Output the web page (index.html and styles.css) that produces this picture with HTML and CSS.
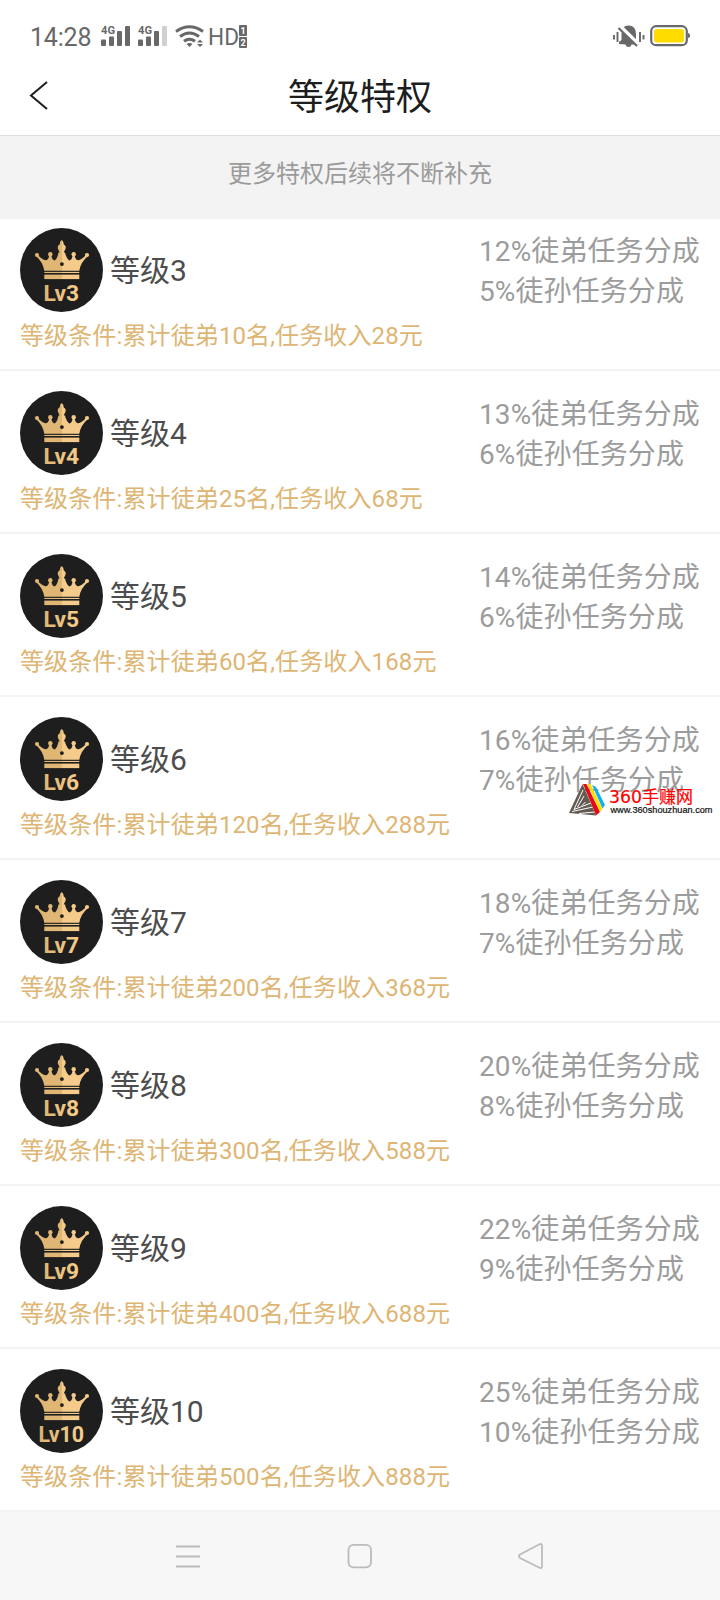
FILE: index.html
```html
<!DOCTYPE html>
<html lang="zh-CN">
<head>
<meta charset="utf-8">
<title>等级特权</title>
<link rel="stylesheet" href="styles.css">
</head>
<body>
<svg class="defs" aria-hidden="true">
  <defs>
    <linearGradient id="gold" gradientUnits="userSpaceOnUse" x1="0" y1="0" x2="83" y2="0">
      <stop offset="0.5" stop-color="#dfb673"/><stop offset="0.5" stop-color="#f4cb8a"/>
    </linearGradient>
    <linearGradient id="goldText" gradientUnits="userSpaceOnUse" x1="22" y1="0" x2="62" y2="0">
      <stop offset="0" stop-color="#dfb472"/><stop offset="1" stop-color="#f8d08e"/>
    </linearGradient>
    <symbol id="crown" viewBox="0 0 83 84">
      <ellipse cx="41.5" cy="42" rx="41.5" ry="42" fill="#1e1e1e"/>
      <g fill="url(#gold)">
        <circle cx="17" cy="27" r="2.1"/><circle cx="30.3" cy="26.3" r="2.2"/>
        <circle cx="53.7" cy="26.3" r="2.2"/><circle cx="67" cy="27" r="2.1"/>
        <path d="M41.7 12C43.2 13.2 43.8 15 43.6 16.2C45.5 17.2 46.2 19 45.5 20.8L43.8 24.3Q45.8 24.5 45.4 26.3Q47.5 32 49.8 32.6Q52 31.5 52.8 27.5L54.6 27.5Q55.6 32.2 58.2 32.3Q61.5 31.8 65.8 27.3L67.5 28.5Q60.8 34 59.3 42.8H24.3Q22.8 34 16.5 28.5L18 27.3Q22.3 31.8 25.6 32.3Q28.3 32.2 29.3 27.5L31.2 27.5Q32 31.5 34.2 32.6Q36.5 32 38.2 26.3Q37.6 24.5 39.6 24.3L37.9 20.8Q37.2 17.2 39.8 16.2Q39.6 13.2 41.7 12Z"/>
        <rect x="24.3" y="43.9" width="35" height="1.1"/>
        <rect x="24.3" y="46.6" width="35" height="4.5"/>
      </g>
      <circle cx="41.9" cy="36.1" r="1.9" fill="#1e1e1e"/>
    </symbol>
  </defs>
</svg>
<div class="screen">
  <header class="status">
    <div class="status-left">
      <span class="clock">14:28</span>
      <svg class="signals" width="150" height="26" viewBox="0 0 150 26" fill="#686868">
        <g>
          <text class="net" x="0" y="9" textLength="14" lengthAdjust="spacingAndGlyphs">4G</text>
          <rect x="0" y="14.5" width="5" height="6.5" rx="1"/><rect x="8" y="11.5" width="5" height="9.5" rx="1"/>
          <rect x="16" y="6" width="5" height="15" rx="1"/><rect x="24" y="1" width="5" height="20" rx="1"/>
        </g>
        <g transform="translate(37 0)">
          <text class="net" x="0" y="9" textLength="14" lengthAdjust="spacingAndGlyphs">4G</text>
          <rect x="0" y="14.5" width="5" height="6.5" rx="1"/><rect x="8" y="11.5" width="5" height="9.5" rx="1"/>
          <rect x="16" y="6" width="5" height="15" rx="1"/><rect x="24" y="1" width="5" height="20" rx="1" fill="#d0d0d0"/>
        </g>
        <g fill="none" stroke="#686868" stroke-width="3">
          <path d="M75 6.500Q88.500 -3 102 6.500"/><path d="M79 11.500Q88.500 4.500 98 11.500"/><path d="M83 16.300Q88.500 12.300 94 16.300"/>
        </g>
        <path d="M85.500 19Q88.500 17 91.500 19L88.500 22ZM96 17.500L99 14.500L102 17.500ZM96 19H102L99 22Z"/>
        <text class="hd" x="107" y="20.200" textLength="31" lengthAdjust="spacingAndGlyphs">HD</text>
        <rect x="138" y="0" width="8" height="11" rx="1"/><rect x="138" y="12" width="8" height="11" rx="1"/>
        <g class="sim" fill="#fff"><text x="139.400" y="9">1</text><text x="139.400" y="21">2</text></g>
      </svg>
    </div>
    <svg class="alerts" width="80" height="26" viewBox="0 0 80 26" fill="#686868">
      <path d="M6 20V18L8.500 16V10Q8.500 1.500 15.500 1.500Q23 1.500 23 10V16L25.500 18V20.500H18.500Q18 23 15.500 23Q13 23 12.500 20.500Z"/>
      <path d="M7.500 2L26 20" stroke="#fff" stroke-width="3"/>
      <path d="M4 2.500L6 1L25.500 20L23.500 22Z" fill="#fff"/>
      <path d="M5.500 4L24 22" stroke="#686868" stroke-width="2.200"/>
      <path d="M1 11V15.500M4.500 8V18M27 8V18M30.500 11V15.500" stroke="#686868" stroke-width="1.900"/>
      <rect x="38.200" y="2.200" width="35.600" height="19" rx="5" fill="none" stroke="#686868" stroke-width="2.200"/>
      <rect x="41" y="5" width="30" height="13.500" rx="3" fill="#ffdc00"/>
      <path d="M75 9Q77 9 77 11.500Q77 14 75 14Z"/>
    </svg>
  </header>
  <nav class="titlebar">
    <svg class="back" width="20" height="32" viewBox="0 0 20 32"><path d="M18 3L2 16.500L18 30" fill="none" stroke="#1d1d1d" stroke-width="2"/></svg>
    <h1>等级特权</h1>
  </nav>
  <p class="notice">更多特权后续将不断补充</p>
  <main class="levels">
    <section class="level"><div class="top"><svg class="badge" viewBox="0 0 83 84"><use href="#crown"/><text x="23.500" y="73" textLength="35.500" lengthAdjust="spacingAndGlyphs">Lv3</text></svg><h2>等级3</h2><div class="share">12%徒弟任务分成<br>5%徒孙任务分成</div></div><p class="cond">等级条件:累计徒弟10名,任务收入28元</p></section>
    <section class="level"><div class="top"><svg class="badge" viewBox="0 0 83 84"><use href="#crown"/><text x="23.500" y="73" textLength="35.500" lengthAdjust="spacingAndGlyphs">Lv4</text></svg><h2>等级4</h2><div class="share">13%徒弟任务分成<br>6%徒孙任务分成</div></div><p class="cond">等级条件:累计徒弟25名,任务收入68元</p></section>
    <section class="level"><div class="top"><svg class="badge" viewBox="0 0 83 84"><use href="#crown"/><text x="23.500" y="73" textLength="35.500" lengthAdjust="spacingAndGlyphs">Lv5</text></svg><h2>等级5</h2><div class="share">14%徒弟任务分成<br>6%徒孙任务分成</div></div><p class="cond">等级条件:累计徒弟60名,任务收入168元</p></section>
    <section class="level"><div class="top"><svg class="badge" viewBox="0 0 83 84"><use href="#crown"/><text x="23.500" y="73" textLength="35.500" lengthAdjust="spacingAndGlyphs">Lv6</text></svg><h2>等级6</h2><div class="share">16%徒弟任务分成<br>7%徒孙任务分成</div></div><p class="cond">等级条件:累计徒弟120名,任务收入288元</p></section>
    <section class="level"><div class="top"><svg class="badge" viewBox="0 0 83 84"><use href="#crown"/><text x="23.500" y="73" textLength="35.500" lengthAdjust="spacingAndGlyphs">Lv7</text></svg><h2>等级7</h2><div class="share">18%徒弟任务分成<br>7%徒孙任务分成</div></div><p class="cond">等级条件:累计徒弟200名,任务收入368元</p></section>
    <section class="level"><div class="top"><svg class="badge" viewBox="0 0 83 84"><use href="#crown"/><text x="23.500" y="73" textLength="35.500" lengthAdjust="spacingAndGlyphs">Lv8</text></svg><h2>等级8</h2><div class="share">20%徒弟任务分成<br>8%徒孙任务分成</div></div><p class="cond">等级条件:累计徒弟300名,任务收入588元</p></section>
    <section class="level"><div class="top"><svg class="badge" viewBox="0 0 83 84"><use href="#crown"/><text x="23.500" y="73" textLength="35.500" lengthAdjust="spacingAndGlyphs">Lv9</text></svg><h2>等级9</h2><div class="share">22%徒弟任务分成<br>9%徒孙任务分成</div></div><p class="cond">等级条件:累计徒弟400名,任务收入688元</p></section>
    <section class="level"><div class="top"><svg class="badge" viewBox="0 0 83 84"><use href="#crown"/><text x="18.500" y="73" textLength="45.500" lengthAdjust="spacingAndGlyphs">Lv10</text></svg><h2>等级10</h2><div class="share">25%徒弟任务分成<br>10%徒孙任务分成</div></div><p class="cond">等级条件:累计徒弟500名,任务收入888元</p></section>
  </main>
  <footer class="navbar">
    <svg width="26" height="30" viewBox="0 0 26 30"><path d="M1 4.500H25M1 14.500H25M1 24.500H25"/></svg>
    <svg width="26" height="30" viewBox="0 0 26 30"><rect x="1.500" y="2.800" width="22.500" height="22.500" rx="5"/></svg>
    <svg width="28" height="30" viewBox="0 0 28 30"><path d="M21 2.500Q23.800 1 24 4V24Q23.800 27 21 25.500L2 16Q0 14 2 12.500Z"/></svg>
  </footer>
  <svg class="watermark" width="150" height="36" viewBox="0 0 150 36">
    <path d="M13.500 1L27 32.500L0 30Z" fill="#655b55"/>
    <path d="M14 7L5 26.500L22 20M15 13L8.500 24M3 28.500L24 24M16.500 19L13 22.500M10 30.500L26 29" fill="none" stroke="#fff" stroke-width="1"/>
    <path d="M14 1H17.500L31 29L27 32.500Z" fill="#e00c18"/>
    <path d="M18.500 1H21.500L33.500 26L31 29Z" fill="#fd0"/>
    <path d="M23 2L27 4L36 22L33.500 25.500Z" fill="#0cb1ed"/>
    <text class="brand digits" x="40" y="20" textLength="33" lengthAdjust="spacingAndGlyphs">360</text>
    <text class="brand" x="73" y="20" textLength="51" lengthAdjust="spacingAndGlyphs">手赚网</text>
    <text class="url" x="41.500" y="30" textLength="102" lengthAdjust="spacingAndGlyphs">www.360shouzhuan.com</text>
  </svg>
</div>
</body>
</html>
```
FILE: styles.css
```css
* { box-sizing: border-box; }
body {
  margin: 0;
  background: #fff;
  font-family: Roboto, "Noto Sans CJK SC", sans-serif;
}
h1, h2, p { margin: 0; font-weight: 400; }
svg { display: block; flex: none; }
.defs { position: absolute; width: 0; height: 0; }
.screen {
  position: relative;
  width: 720px;
  height: 1600px;
  display: flex;
  flex-direction: column;
  overflow: hidden;
}
.status {
  height: 60px;
  padding: 24px 27px 0 30px;
  display: flex;
  justify-content: space-between;
}
.status-left { display: flex; }
.clock {
  width: 71px;
  font-size: 25px;
  line-height: 27px;
  letter-spacing: -0.2px;
  color: #686868;
}
.signals { margin-top: 1px; overflow: visible; }
.net { font-size: 11px; font-weight: 700; }
.hd { font-size: 24px; }
.sim { font-size: 9px; font-weight: 700; }
.titlebar {
  height: 76px;
  display: grid;
  grid-template-columns: 60px 1fr 60px;
  border-bottom: 1px solid #dedede;
}
.back { margin: 19px 0 0 29px; }
.titlebar h1 {
  font-size: 36px;
  line-height: 76px;
  text-align: center;
  color: #1d1d1d;
}
.notice {
  height: 83px;
  background: #f3f3f3;
  color: #9b9b9b;
  font-size: 24px;
  line-height: 77px;
  text-align: center;
}
.level {
  height: 163px;
  padding: 20px 20px 0;
  border-bottom: 2px solid #f3f3f3;
}
.level:first-child { height: 152px; padding-top: 9px; }
.top { display: flex; height: 84px; }
.badge { width: 83px; height: 84px; }
.badge text {
  font: 700 22px Roboto, sans-serif;
  fill: url(#goldText);
}
.top h2 {
  flex: 1;
  margin-left: 7px;
  font-size: 30px;
  line-height: 86px;
  color: #4d4d4d;
}
.share {
  width: 221px;
  padding-top: 4px;
  font-size: 28px;
  line-height: 40px;
  letter-spacing: 0.1px;
  white-space: nowrap;
  color: #9c9c9c;
}
.cond {
  font-size: 24px;
  line-height: 48px;
  letter-spacing: 0.12px;
  color: #deb573;
  white-space: nowrap;
}
.navbar {
  flex: 1;
  background: #f7f7f7;
  display: flex;
  justify-content: space-between;
  padding: 30px 174px 0 175px;
}
.navbar path, .navbar rect { fill: none; stroke: #bbb; stroke-width: 1.8; }
.watermark { position: absolute; left: 569px; top: 783px; }
.brand { font: 17px "Noto Sans CJK SC", sans-serif; fill: #f00; stroke: #f00; stroke-width: 0.2px; }
.digits { font: 18px "DejaVu Sans", sans-serif; }
.url { font: 8.5px "Liberation Sans", sans-serif; fill: #111; stroke: #111; stroke-width: 0.2px; }
```
